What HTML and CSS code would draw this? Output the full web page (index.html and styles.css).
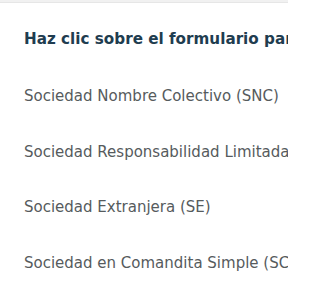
FILE: index.html
```html
<!DOCTYPE html>
<html lang="es">
<head>
<meta charset="utf-8">
<title>Formularios</title>
<link rel="stylesheet" href="styles.css">
</head>
<body>
<div class="topbar"></div>
<main class="panel">
  <h2 class="title">Haz clic sobre el formulario para descargarlo</h2>
  <ul class="forms">
    <li class="form-item">Sociedad Nombre Colectivo (SNC)</li>
    <li class="form-item">Sociedad Responsabilidad Limitada (SRL)</li>
    <li class="form-item">Sociedad Extranjera (SE)</li>
    <li class="form-item">Sociedad en Comandita Simple (SCS)</li>
  </ul>
</main>
</body>
</html>
```
FILE: styles.css
```css
html, body {
  margin: 0;
  padding: 0;
  background: #ffffff;
  overflow: hidden;
}
body {
  width: 288px;
  height: 288px;
  font-family: "DejaVu Sans", "Liberation Sans", sans-serif;
}
.topbar {
  height: 2px;
  background: #f1f1f1;
  border-bottom: 1px solid #e6e6e6;
}
.panel {
  padding: 26.4px 0 0 24px;
}
.title {
  margin: 0 0 19.9px 0;
  font-size: 15.2px;
  line-height: 20px;
  font-weight: 700;
  color: #1f3d50;
  white-space: nowrap;
  overflow: hidden;
}
.forms {
  list-style: none;
  margin: 0;
  padding: 0;
}
.form-item {
  font-size: 15px;
  line-height: 55.5px;
  color: #565b5d;
  white-space: nowrap;
  overflow: hidden;
}
```
